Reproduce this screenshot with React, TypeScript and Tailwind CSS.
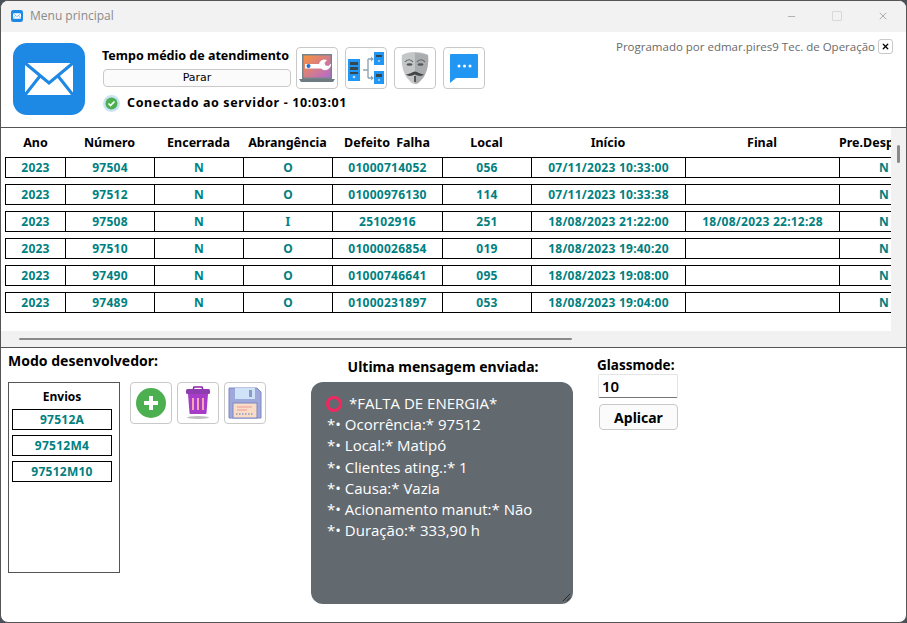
import { Minus, X } from 'lucide-react';

const rows = [
    ['2023', '97504', 'N', 'O', '01000714052', '056', '07/11/2023 10:33:00', '', 'N'],
    ['2023', '97512', 'N', 'O', '01000976130', '114', '07/11/2023 10:33:38', '', 'N'],
    ['2023', '97508', 'N', 'I', '25102916', '251', '18/08/2023 21:22:00', '18/08/2023 22:12:28', 'N'],
    ['2023', '97510', 'N', 'O', '01000026854', '019', '18/08/2023 19:40:20', '', 'N'],
    ['2023', '97490', 'N', 'O', '01000746641', '095', '18/08/2023 19:08:00', '', 'N'],
    ['2023', '97489', 'N', 'O', '01000231897', '053', '18/08/2023 19:04:00', '', 'N'],
];

const headers = ['Ano', 'Número', 'Encerrada', 'Abrangência', 'Defeito Falha', 'Local', 'Início', 'Final', 'Pre.Desp'];

const message = ['Ocorrência:* 97512', 'Local:* Matipó', 'Clientes ating.:* 1', 'Causa:* Vazia', 'Acionamento manut:* Não', 'Duração:* 333,90 h'];

const colsClass = 'grid grid-cols-[59px_89px_89px_89px_110px_89px_154px_154px_89px] w-[923px]';

function Envelope({ className }: { className: string }) {
    return (
        <svg viewBox="0 0 72 72" className={className}>
            <rect width="72" height="72" rx="14" fill="#1e88e5" />
            <path d="M12 20h48v32H12z" fill="#fff" />
            <path d="M12 20l24 20 24-20M12 52l15-19M60 52L45 33" fill="none" stroke="#1e88e5" strokeWidth="3" />
        </svg>
    );
}

function IconButton({ children }: { children: React.ReactNode }) {
    return (
        <button className="w-[42px] h-[42px] flex items-center justify-center bg-white border border-[#c9c9c9] rounded-[4px]">
            {children}
        </button>
    );
}

function ToolsIcon() {
    return (
        <svg viewBox="0 0 36 32" className="w-[36px] h-[32px]">
            <defs>
                <linearGradient id="screen" x1="0" y1="0" x2="1" y2="1">
                    <stop offset="0" stopColor="#f9913c" />
                    <stop offset="1" stopColor="#b46ad0" />
                </linearGradient>
            </defs>
            <rect x="3" y="2" width="30" height="25" fill="#78848c" />
            <rect x="4.500" y="3.500" width="27" height="22" fill="url(#screen)" />
            <path d="M0 27h36l-2 3H2z" fill="#6f7b83" />
            <path d="M6 12h14a6 6 0 0 1 5-4.500l3 .5-2.500 3 1 2.500 3 .5 2.500-2.500a6 6 0 0 1-10 5H6z" fill="#fff" />
            <circle cx="9.500" cy="14" r="2" fill="#1e6fd0" />
        </svg>
    );
}

function ServersIcon() {
    return (
        <svg viewBox="0 0 36 34" className="w-[36px] h-[34px]">
            <rect x="0" y="8" width="12" height="22" fill="#2196f3" />
            <path d="M2 11h8v3H2zM2 16h8v3H2zM2 21h8v2H2z" fill="#37474f" />
            <circle cx="6" cy="26" r="1.300" fill="#bbdefb" />
            <rect x="26" y="1" width="10" height="13" fill="#2196f3" />
            <path d="M28 4h6v2h-6z" fill="#37474f" />
            <circle cx="31" cy="10" r="1" fill="#bbdefb" />
            <rect x="26" y="20" width="10" height="13" fill="#2196f3" />
            <path d="M28 23h6v3h-6z" fill="#37474f" />
            <circle cx="31" cy="29" r="1" fill="#bbdefb" />
            <path d="M15 19h5M20 8v19M20 8h4M20 27h4" fill="none" stroke="#90a4ae" strokeWidth="1.400" />
            <path d="M23 5.500l3 2.500-3 2.500zM23 24.500l3 2.500-3 2.500z" fill="#90a4ae" />
        </svg>
    );
}

function MaskIcon() {
    return (
        <svg viewBox="0 0 28 34" className="w-[28px] h-[34px]">
            <path d="M1 4C7 0 21 0 27 4c1 9-1 17-5 23-3 3-5 6-8 6s-5-3-8-6C2 21 0 13 1 4z" fill="#c4c7c8" />
            <path d="M14 2c5 0 9 1 13 2 1 9-1 17-5 23-3 3-5 6-8 6z" fill="#a9adaf" />
            <path d="M4 11c2-3 6-3 8 0M16 11c2-3 6-3 8 0" fill="none" stroke="#666" strokeWidth="1.200" />
            <ellipse cx="8.500" cy="13.500" rx="3" ry="1.300" fill="#555" />
            <ellipse cx="19.500" cy="13.500" rx="3" ry="1.300" fill="#555" />
            <path d="M5 23c3 1 6-2 9-2.500 3 .5 6 3.500 9 2.500-2 3-6 2-9 .5-3 1.500-7 2.500-9-.5z" fill="#444" />
            <path d="M13 25h2v6h-2z" fill="#555" />
        </svg>
    );
}

function ChatIcon() {
    return (
        <svg viewBox="0 0 30 32" className="w-[30px] h-[32px]">
            <path d="M2 2h26a1 1 0 0 1 1 1v22a1 1 0 0 1-1 1H7l-6 5V3a1 1 0 0 1 1-1z" fill="#2196f3" />
            <circle cx="10" cy="14" r="1.500" fill="#fff" />
            <circle cx="15.500" cy="14" r="1.500" fill="#fff" />
            <circle cx="21" cy="14" r="1.500" fill="#fff" />
        </svg>
    );
}

function PlusIcon() {
    return (
        <svg viewBox="0 0 30 30" className="w-[30px] h-[30px]">
            <circle cx="15" cy="15" r="15" fill="#4caf50" />
            <path d="M15 8v14M8 15h14" stroke="#fff" strokeWidth="4" />
        </svg>
    );
}

function TrashIcon() {
    return (
        <svg viewBox="0 0 26 34" className="w-[26px] h-[34px]">
            <ellipse cx="13" cy="31.500" rx="11" ry="1.500" fill="#bdbdbd" />
            <path d="M9 1h8l1 3h-10z" fill="none" stroke="#8e24aa" strokeWidth="1.500" />
            <rect x="1" y="3" width="24" height="5" rx="1.500" fill="#8e3cb0" />
            <path d="M3 8h20l-1.500 19a1 1 0 0 1-1 1H5.500a1 1 0 0 1-1-1z" fill="#a63cc8" />
            <path d="M8 12v12M13 12v12M18 12v12" stroke="#f6a6b2" strokeWidth="2" />
        </svg>
    );
}

function SaveIcon() {
    return (
        <svg viewBox="0 0 34 32" className="w-[34px] h-[32px]">
            <path d="M1 1h28l4 4v26H1z" fill="#9fa8da" stroke="#7e88c4" />
            <rect x="7" y="1" width="20" height="11" fill="#cfe3f8" />
            <rect x="21" y="3" width="3" height="7" fill="#8e97c9" />
            <rect x="5" y="16" width="24" height="15" fill="#f8dcc6" stroke="#7e88c4" />
            <path d="M9 20h15M9 23h10" stroke="#ef9a9a" strokeWidth="1" />
            <path d="M8 27h18" stroke="#8e97c9" strokeWidth="1.500" strokeDasharray="1.500 1.500" />
        </svg>
    );
}

export default function App() {
    return (
        <div className="w-[907px] h-[623px] bg-[#4a5058] overflow-hidden font-['Noto_Sans',sans-serif]">
            <div className="w-full h-full flex flex-col bg-white border border-[#555] rounded-[8px] overflow-hidden">
                {/* title bar */}
                <div className="h-[31px] shrink-0 flex items-center bg-[#f2f2f2] pl-[10px] pb-[1px]">
                    <Envelope className="w-[12px] h-[12px]" />
                    <span className="ml-[7px] text-[12px] text-[#8a8a8a] font-['Open_Sans',sans-serif]">Menu principal</span>
                    <div className="ml-auto flex items-center gap-[35px] pr-[17px]">
                        <Minus size={11} strokeWidth={1} className="text-[#666]" />
                        <div className="w-[10px] h-[10px] border border-[#d8d8d8] rounded-[1px]" />
                        <X size={12} strokeWidth={1} className="text-[#666]" />
                    </div>
                </div>

                {/* header */}
                <div className="h-[96px] shrink-0 flex border-b border-[#555] pl-[12px] pr-[13px]">
                    <Envelope className="w-[72px] h-[72px] mt-[11px]" />
                    <div className="ml-[17px] w-[189px] mt-[15px]">
                        <div className="text-[12.5px] leading-[18px] font-bold text-black whitespace-nowrap">Tempo médio de atendimento</div>
                        <button className="block w-[188px] h-[18px] mt-[4px] ml-[1px] border border-[#c9c9c9] rounded-[4px] bg-[#fbfbfb] text-[11px] leading-[16px] font-['DejaVu_Sans',sans-serif] text-black">Parar</button>
                        <div className="flex items-center mt-[7px] ml-[1px]">
                            <svg viewBox="0 0 17 17" className="w-[17px] h-[17px] shrink-0">
                                <circle cx="8.500" cy="8.500" r="8.500" fill="#c9e3f5" />
                                <circle cx="8.500" cy="8.500" r="6" fill="#4caf50" />
                                <path d="M5.500 8.500l2 2 4-4" fill="none" stroke="#fff" strokeWidth="1.600" />
                            </svg>
                            <span className="ml-[7px] text-[12.5px] tracking-[0.62px] font-bold text-black whitespace-nowrap">Conectado ao servidor - 10:03:01</span>
                        </div>
                    </div>
                    <div className="flex gap-[7px] mt-[15px] ml-[5px] h-[42px]">
                        <IconButton><ToolsIcon /></IconButton>
                        <IconButton><ServersIcon /></IconButton>
                        <IconButton><MaskIcon /></IconButton>
                        <IconButton><ChatIcon /></IconButton>
                    </div>
                    <div className="ml-auto flex items-start mt-[7px] h-[16px]">
                        <span className="text-[11.5px] leading-[16px] text-[#6a6a6a] font-['Open_Sans',sans-serif] whitespace-nowrap">Programado por edmar.pires9 Tec. de Operação</span>
                        <button className="ml-[3px] w-[15px] h-[15px] flex items-center justify-center border border-[#c9c9c9] rounded-[3px]">
                            <X size={9} strokeWidth={3.500} className="text-black" />
                        </button>
                    </div>
                </div>

                {/* table */}
                <div className="h-[220px] shrink-0 flex flex-col border-b border-[#555]">
                    <div className="flex flex-1 min-h-0">
                        <div className="w-[890px] overflow-hidden pl-[4px]">
                            <div className={`${colsClass} h-[29px] pt-[2px] items-center border-x border-transparent text-[12.5px] [word-spacing:3px] font-bold text-black text-center`}>
                                {headers.map((h, i) => (
                                    <div key={h} className={`whitespace-nowrap ${i === 8 ? 'text-left' : ''}`}>{h}</div>
                                ))}
                            </div>
                            <div className="flex flex-col gap-[6px]">
                                {rows.map(row => (
                                    <div key={row[1]} className={`${colsClass} h-[21px] border border-black`}>
                                        {row.map((cell, i) => (
                                            <div
                                                key={i}
                                                className={`${i > 0 ? 'border-l border-black' : ''} text-center text-[12px] leading-[19px] tracking-[0.25px] font-bold text-[#008080] whitespace-nowrap`}
                                            >
                                                {cell}
                                            </div>
                                        ))}
                                    </div>
                                ))}
                            </div>
                        </div>
                        <div className="flex-1 bg-[#f1f1f1] pt-[17px] flex justify-center">
                            <div className="w-[3px] h-[18px] bg-[#8a8a8a] rounded-full" />
                        </div>
                    </div>
                    <div className="h-[16px] shrink-0 bg-[#f1f1f1] flex items-center pl-[18px]">
                        <div className="w-[553px] h-[2px] bg-[#8a8a8a] rounded-full" />
                    </div>
                </div>

                {/* bottom */}
                <div className="flex-1 min-h-0 flex pl-[7px]">
                    <div className="w-[303px] shrink-0 pt-[3px]">
                        <div className="text-[14px] leading-[20px] font-bold text-black">Modo desenvolvedor:</div>
                        <div className="flex mt-[11px]">
                            <div className="w-[112px] h-[191px] border border-[#555] pl-[3px] pt-[5px]">
                                <div className="w-[100px] text-center text-[12px] leading-[18px] font-bold font-['Open_Sans',sans-serif] text-black">Envios</div>
                                <div className="flex flex-col gap-[5px] mt-[3px] w-[100px]">
                                    {['97512A', '97512M4', '97512M10'].map(v => (
                                        <div key={v} className="h-[21px] border border-black text-center text-[12px] leading-[19px] tracking-[0.25px] font-bold text-[#008080]">{v}</div>
                                    ))}
                                </div>
                            </div>
                            <div className="flex gap-[5px] ml-[10px] h-[42px]">
                                <IconButton><PlusIcon /></IconButton>
                                <IconButton><TrashIcon /></IconButton>
                                <IconButton><SaveIcon /></IconButton>
                            </div>
                        </div>
                    </div>

                    <div className="w-[262px] shrink-0 pt-[9px]">
                        <div className="text-center pl-[2px] text-[14px] leading-[20px] font-bold text-black whitespace-nowrap">Ultima mensagem enviada:</div>
                        <div className="relative mt-[5px] h-[222px] bg-[#636a6f] rounded-[12px] pl-[16px] pt-[11px] text-[15px] leading-[21.2px] text-white font-['Open_Sans',sans-serif]">
                            <div className="flex items-center">
                                <div className="w-[16px] h-[16px] -ml-[1px] rounded-full border-[3px] border-[#f0285f]" />
                                <span className="ml-[7px]">*FALTA DE ENERGIA*</span>
                            </div>
                            {message.map(m => (
                                <div key={m}>*• {m}</div>
                            ))}
                            <svg viewBox="0 0 10 10" className="absolute right-[2px] bottom-[2px] w-[9px] h-[9px]">
                                <path d="M1 9l8-8M5 9l4-4" stroke="#222" strokeWidth="1" />
                            </svg>
                        </div>
                    </div>

                    <div className="ml-[24px] w-[82px] shrink-0 pt-[9px]">
                        <div className="text-[13.500px] leading-[17px] font-bold text-black">Glassmode:</div>
                        <input readOnly value="10" className="block w-[80px] h-[24px] ml-[1px] border border-[#e4e4e4] border-b-[#767676] rounded-[2px] px-[3px] text-[15px] font-semibold text-black outline-none" />
                        <button className="block w-[79px] h-[26px] mt-[6px] ml-[2px] border border-[#c9c9c9] rounded-[4px] bg-[#fbfbfb] text-[14px] font-bold text-black">Aplicar</button>
                    </div>
                </div>
            </div>
        </div>
    );
}
